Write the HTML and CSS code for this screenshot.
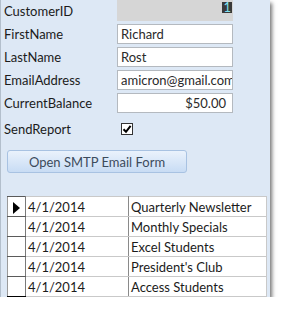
FILE: index.html
```html
<!DOCTYPE html>
<html lang="en">
<head>
	<meta charset="UTF-8">
	<title>Customer</title>
	<link rel="stylesheet" href="styles.css">
</head>
<body>
	<div class="panel">
		<form class="form">
			<label class="form-label">CustomerID</label>
			<div class="form-field field-id"><span class="sel">1</span></div>
			<label class="form-label">FirstName</label>
			<div class="form-field">Richard</div>
			<label class="form-label">LastName</label>
			<div class="form-field">Rost</div>
			<label class="form-label">EmailAddress</label>
			<div class="form-field">amicron@gmail.com</div>
			<label class="form-label">CurrentBalance</label>
			<div class="form-field field-money">$50.00</div>
		</form>
		<div class="send-row">
			<span class="form-label">SendReport</span>
			<span class="check">
				<svg width="10" height="10" viewBox="0 0 10 10"><path d="M1.5 5.2 L4 7.8 L8.6 1.8" fill="none" stroke="#000" stroke-width="2"/></svg>
			</span>
		</div>
		<button class="btn" type="button">Open SMTP Email Form</button>
		<table class="grid">
			<tr><td class="sel-cell"><span class="arrow"></span></td><td class="date">4/1/2014</td><td>Quarterly Newsletter</td></tr>
			<tr><td class="sel-cell"></td><td class="date">4/1/2014</td><td>Monthly Specials</td></tr>
			<tr><td class="sel-cell"></td><td class="date">4/1/2014</td><td>Excel Students</td></tr>
			<tr><td class="sel-cell"></td><td class="date">4/1/2014</td><td>President's Club</td></tr>
			<tr class="last"><td class="sel-cell"></td><td class="date">4/1/2014</td><td>Access Students</td></tr>
		</table>
	</div>
</body>
</html>
```

FILE: styles.css
```css
* {
	box-sizing: border-box;
	margin: 0;
	padding: 0;
}
body {
	background: #fff;
	font-family: Lato, "Liberation Sans", sans-serif;
	font-size: 13px;
	color: #1b1b1b;
}
.panel {
	width: 270px;
	height: 297px;
	background: #dde8f5;
	border-left: 1px solid #b3bfcc;
	box-shadow: 2px 3px 4px rgba(0, 0, 0, 0.55);
	overflow: hidden;
}

.form {
	display: grid;
	grid-template-columns: 116px 116px;
	row-gap: 3px;
	padding-top: 1px;
}
.form-label {
	padding-left: 3px;
	line-height: 20px;
}
.form-field {
	height: 20px;
	background: #fff;
	border: 1px solid #b4b9bf;
	padding-left: 3px;
	line-height: 18px;
	color: #2a2a2a;
	white-space: nowrap;
	overflow: hidden;
}
.field-id {
	background: #d6d6d6;
	border: none;
	margin-top: -1px;
	height: 21px;
	text-align: right;
	padding-right: 1px;
}
.sel {
	display: inline-block;
	background: #3a3a3a;
	color: #7fe0f0;
	line-height: 11px;
	padding: 0 1px;
	margin-top: 2px;
	vertical-align: top;
}
.field-money {
	text-align: right;
	padding-right: 6px;
}

.send-row {
	display: flex;
	align-items: center;
	margin-top: 6px;
	height: 20px;
}
.send-row .form-label {
	width: 120px;
}
.check {
	width: 12px;
	height: 12px;
	background: #fff;
	border: 1px solid #333;
	display: flex;
	align-items: center;
	justify-content: center;
}

.btn {
	display: block;
	margin: 11px 0 0 6px;
	width: 180px;
	height: 23px;
	border: 1px solid #a8c2e2;
	border-radius: 3px;
	background: linear-gradient(#eaf2fc, #c8dcf4);
	font-family: Lato, "Liberation Sans", sans-serif;
	font-size: 13px;
	color: #3c4b5c;
}

.grid {
	margin: 23px 0 0 6px;
	width: 260px;
	border-collapse: collapse;
	background: #fff;
	table-layout: fixed;
}
.grid td {
	height: 20px;
	border: 1px solid #c9c9c9;
	padding-left: 2px;
	line-height: 18px;
	white-space: nowrap;
	overflow: hidden;
}
.grid td.sel-cell {
	width: 18px;
	border-color: #5a5a5a #7a7a7a #5a5a5a #9a9a9a;
}
.grid td.date {
	width: 103px;
	border-left: 1px solid #8a8a8a;
	border-right: 1px solid #8a8a8a;
}
.grid .last td.sel-cell {
	border-bottom: 2px solid #000;
}
.arrow {
	display: inline-block;
	border-left: 7px solid #000;
	border-top: 6px solid transparent;
	border-bottom: 6px solid transparent;
	vertical-align: middle;
	margin-left: 3px;
}
```
